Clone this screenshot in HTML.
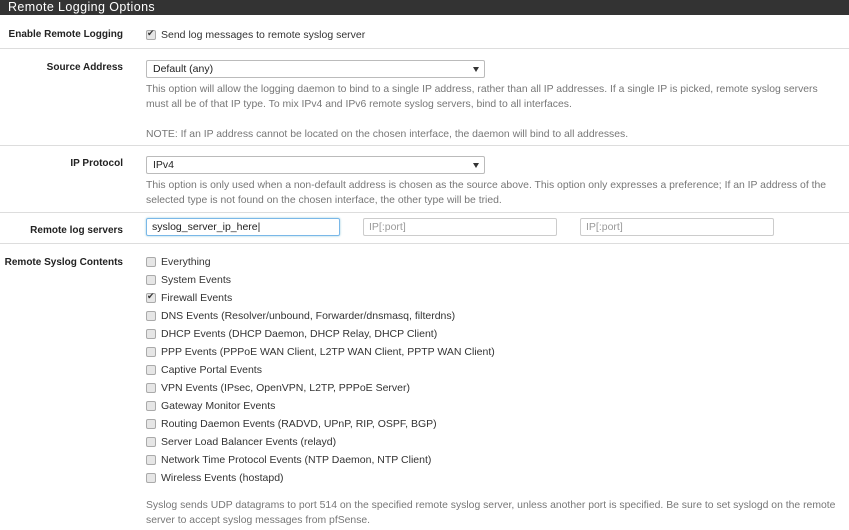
<!DOCTYPE html>
<html><head><style>
*{box-sizing:border-box;margin:0;padding:0}
body{width:849px;height:530px;background:#fff;font-family:"Liberation Sans",sans-serif;font-size:10.5px;color:#222;position:relative;overflow:hidden}
.hd{position:absolute;left:0;top:0;width:849px;height:15px;background:#333;color:#fff;font-size:12.5px;line-height:14px;padding-left:8px;letter-spacing:.4px}
.hr{position:absolute;left:0;width:849px;height:1px;background:#ddd}
.lb{position:absolute;right:726px;text-align:right;font-weight:bold;font-size:10px;white-space:nowrap;color:#222}
.help{position:absolute;left:146px;color:#777;font-size:10.4px;line-height:15px;width:700px;white-space:nowrap}
.sel{position:absolute;left:146px;width:339px;height:18px;border:1px solid #bbb;border-radius:2px;padding-left:6px;line-height:16px;font-size:10.5px}
.sel:after{content:"";position:absolute;right:5px;top:6px;border-left:3px solid transparent;border-right:3px solid transparent;border-top:5px solid #333}
.in{position:absolute;top:218px;width:194px;height:18px;border:1px solid #ccc;border-radius:2px;padding-left:5px;line-height:16px;color:#999}
.cb{position:absolute;left:146px;width:10px;height:10px;border:1px solid #aaa;border-radius:2px;background:#e6e6e6}
.ck:after{content:"✔";position:absolute;left:0px;top:-3px;font-size:9px;color:#333}
.ct{position:absolute;left:161px;white-space:nowrap;font-size:10.5px;color:#333}
</style></head><body>
<div class="hd">Remote Logging Options</div>
<div class="lb" style="top:29px">Enable Remote Logging</div>
<div class="cb ck" style="top:30px"></div><div class="ct" style="top:29px">Send log messages to remote syslog server</div>
<div class="hr" style="top:48px"></div>
<div class="lb" style="top:62px">Source Address</div>
<div class="sel" style="top:60px">Default (any)</div>
<div class="help" style="top:82px">This option will allow the logging daemon to bind to a single IP address, rather than all IP addresses. If a single IP is picked, remote syslog servers<br>must all be of that IP type. To mix IPv4 and IPv6 remote syslog servers, bind to all interfaces.<br><br>NOTE: If an IP address cannot be located on the chosen interface, the daemon will bind to all addresses.</div>
<div class="hr" style="top:145px"></div>
<div class="lb" style="top:158px">IP Protocol</div>
<div class="sel" style="top:156px">IPv4</div>
<div class="help" style="top:178px">This option is only used when a non-default address is chosen as the source above. This option only expresses a preference; If an IP address of the<br>selected type is not found on the chosen interface, the other type will be tried.</div>
<div class="hr" style="top:212px"></div>
<div class="lb" style="top:225px">Remote log servers</div>
<div class="in" style="left:146px;border-color:#7ab8e8;color:#222;box-shadow:0 0 2px #9cd">syslog_server_ip_here|</div>
<div class="in" style="left:363px">IP[:port]</div>
<div class="in" style="left:580px">IP[:port]</div>
<div class="hr" style="top:243px"></div>
<div class="lb" style="top:257px">Remote Syslog Contents</div>
<div class="cb" style="top:257px"></div><div class="ct" style="top:256px">Everything</div>
<div class="cb" style="top:275px"></div><div class="ct" style="top:274px">System Events</div>
<div class="cb ck" style="top:293px"></div><div class="ct" style="top:292px">Firewall Events</div>
<div class="cb" style="top:311px"></div><div class="ct" style="top:310px">DNS Events (Resolver/unbound, Forwarder/dnsmasq, filterdns)</div>
<div class="cb" style="top:329px"></div><div class="ct" style="top:328px">DHCP Events (DHCP Daemon, DHCP Relay, DHCP Client)</div>
<div class="cb" style="top:347px"></div><div class="ct" style="top:346px">PPP Events (PPPoE WAN Client, L2TP WAN Client, PPTP WAN Client)</div>
<div class="cb" style="top:365px"></div><div class="ct" style="top:364px">Captive Portal Events</div>
<div class="cb" style="top:383px"></div><div class="ct" style="top:382px">VPN Events (IPsec, OpenVPN, L2TP, PPPoE Server)</div>
<div class="cb" style="top:401px"></div><div class="ct" style="top:400px">Gateway Monitor Events</div>
<div class="cb" style="top:419px"></div><div class="ct" style="top:418px">Routing Daemon Events (RADVD, UPnP, RIP, OSPF, BGP)</div>
<div class="cb" style="top:437px"></div><div class="ct" style="top:436px">Server Load Balancer Events (relayd)</div>
<div class="cb" style="top:455px"></div><div class="ct" style="top:454px">Network Time Protocol Events (NTP Daemon, NTP Client)</div>
<div class="cb" style="top:473px"></div><div class="ct" style="top:472px">Wireless Events (hostapd)</div>
<div class="help" style="top:498px">Syslog sends UDP datagrams to port 514 on the specified remote syslog server, unless another port is specified. Be sure to set syslogd on the remote<br>server to accept syslog messages from pfSense.</div>
</body></html>
